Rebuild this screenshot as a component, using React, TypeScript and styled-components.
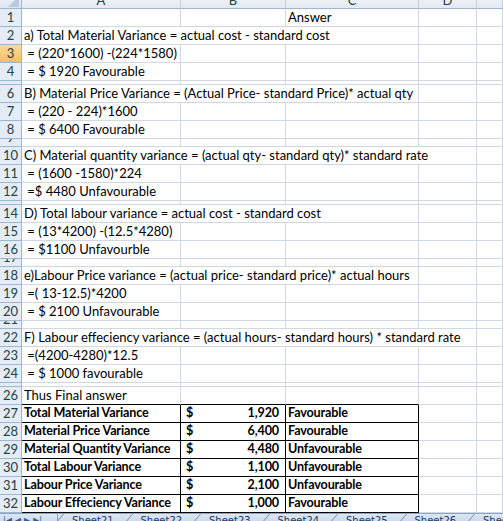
import React from "react";
import styled, { createGlobalStyle, css } from "styled-components";

const GlobalStyle = createGlobalStyle`
  html, body { margin: 0; padding: 0; background: #ffffff; overflow: hidden; }
  * { box-sizing: border-box; }
`;

const COLS = "22px 159px 105px 133px 58px 1fr";
const GRID = "#d0d7e5";
const HEAD_LINE = "#9eb6ce";
const FONT = `Lato, "Open Sans", "Liberation Sans", sans-serif`;

const Sheet = styled.div`
  width: 503px;
  height: 521px;
  overflow: hidden;
  display: flex;
  flex-direction: column;
  background: #fff;
  font-family: ${FONT};
  font-size: 13px;
  color: #000;
`;

const HeaderRow = styled.div`
  display: grid;
  grid-template-columns: ${COLS};
  height: 20px;
  margin-top: -11px;
  flex: none;
`;

const Corner = styled.div`
  background: linear-gradient(#f3f6fb, #dfe6f0);
  border-right: 1px solid ${HEAD_LINE};
  border-bottom: 1px solid ${HEAD_LINE};
  position: relative;
  svg { position: absolute; right: 2px; bottom: 1px; }
`;

const ColHead = styled.div`
  background: linear-gradient(#f7f9fc, #e4eaf3);
  border-right: 1px solid #c5d2e0;
  border-bottom: 1px solid ${HEAD_LINE};
  text-align: center;
  padding-top: 3px;
  line-height: 16px;
  color: #27413e;
  font-size: 13px;
`;

const Row = styled.div<{ $h: number }>`
  display: grid;
  grid-template-columns: ${COLS};
  height: ${(p) => p.$h}px;
  flex: none;
`;

const RowHead = styled.div<{ $selected?: boolean }>`
  display: flex;
  align-items: flex-end;
  justify-content: center;
  padding-bottom: 1px;
  overflow: hidden;
  border-right: 1px solid ${HEAD_LINE};
  border-bottom: 1px solid ${HEAD_LINE};
  background: ${(p) =>
    p.$selected ? "linear-gradient(#f9d99f, #f1c15f)" : "#e4ecf7"};
  color: #27413e;
  font-size: 13px;
  line-height: 16px;
`;

const Cell = styled.div<{
  $span?: number;
  $bold?: boolean;
  $boxed?: boolean;
  $edge?: boolean;
}>`
  grid-column: span ${(p) => p.$span ?? 1};
  display: flex;
  align-items: flex-end;
  padding: 0 2px 1px 2px;
  white-space: pre;
  overflow: hidden;
  line-height: 16px;
  border-right: 1px solid ${GRID};
  border-bottom: 1px solid ${GRID};
  ${(p) =>
    p.$bold &&
    css`
      font-weight: 700;
      font-size: 12.6px;
      letter-spacing: -0.15px;
    `}
  ${(p) =>
    p.$edge &&
    css`
      border-bottom-color: #000;
    `}
  ${(p) =>
    p.$boxed &&
    css`
      border-right-color: #000;
      border-bottom-color: #000;
    `}
`;

const MoneyCell = styled(Cell)`
  justify-content: space-between;
  padding: 0 6px 1px 5px;
`;

const TabBar = styled.div`
  flex: none;
  height: 8px;
  overflow: hidden;
  display: flex;
  background: linear-gradient(#dce6f4, #cfdbec);
  border-top: 1px solid #8ea6c2;
  font-family: Tahoma, "DejaVu Sans", sans-serif;
  font-size: 10px;
  color: #1e395b;
`;

const NavArea = styled.div`
  width: 58px;
  flex: none;
  display: flex;
  gap: 3px;
  padding: 1px 0 0 3px;
  border-right: 1px solid #8ea6c2;
  font-size: 8px;
  line-height: 12px;
  color: #3b5a82;
`;

const Tab = styled.div`
  width: 68.5px;
  flex: none;
  position: relative;
  padding: 1px 0 0 14px;
  line-height: 12px;
  &::before {
    content: "";
    position: absolute;
    left: 5px;
    top: 0;
    width: 1px;
    height: 20px;
    background: #7a8ea8;
    transform: skewX(-40deg);
    transform-origin: top left;
  }
`;

type CellSpec = { text?: string; span?: number; edge?: boolean };
type RowSpec = { n: number; h: number; cells?: CellSpec[]; selected?: boolean };

const rows: RowSpec[] = [
  { n: 1, h: 18, cells: [{}, {}, { text: "Answer" }] },
  { n: 2, h: 18, cells: [{ text: "a) Total Material Variance = actual cost - standard cost", span: 3 }] },
  { n: 3, h: 18, cells: [{ text: " = (220*1600) -(224*1580)" }], selected: true },
  { n: 4, h: 18, cells: [{ text: " = $ 1920 Favourable" }] },
  { n: 5, h: 4 },
  { n: 6, h: 18, cells: [{ text: "B) Material Price Variance = (Actual Price- standard Price)* actual qty", span: 3 }] },
  { n: 7, h: 18, cells: [{ text: " = (220 - 224)*1600" }] },
  { n: 8, h: 18, cells: [{ text: " = $ 6400 Favourable" }] },
  { n: 9, h: 8 },
  { n: 10, h: 18, cells: [{ text: "C) Material quantity variance = (actual qty- standard qty)* standard rate", span: 4 }] },
  { n: 11, h: 18, cells: [{ text: " = (1600 -1580)*224" }] },
  { n: 12, h: 18, cells: [{ text: " =$ 4480 Unfavourable" }] },
  { n: 13, h: 4 },
  { n: 14, h: 18, cells: [{ text: "D) Total labour variance = actual cost - standard cost", span: 3 }] },
  { n: 15, h: 18, cells: [{ text: " = (13*4200) -(12.5*4280)" }] },
  { n: 16, h: 18, cells: [{ text: " = $1100 Unfavourble" }] },
  { n: 17, h: 8 },
  { n: 18, h: 18, cells: [{ text: "e)Labour Price variance = (actual price- standard price)* actual hours", span: 3 }] },
  { n: 19, h: 18, cells: [{ text: " =( 13-12.5)*4200" }] },
  { n: 20, h: 18, cells: [{ text: " = $ 2100 Unfavourable" }] },
  { n: 21, h: 8 },
  { n: 22, h: 18, cells: [{ text: "F) Labour effeciency variance = (actual hours- standard hours) * standard rate", span: 4 }] },
  { n: 23, h: 18, cells: [{ text: " =(4200-4280)*12.5" }] },
  { n: 24, h: 18, cells: [{ text: " = $ 1000 favourable" }] },
  { n: 25, h: 4 },
  { n: 26, h: 18, cells: [{ text: "Thus Final answer", edge: true }, { edge: true }, { edge: true }] },
];

const summary = [
  { n: 27, label: "Total Material Variance", amount: "1,920", status: "Favourable" },
  { n: 28, label: "Material Price Variance", amount: "6,400", status: "Favourable" },
  { n: 29, label: "Material Quantity Variance", amount: "4,480", status: "Unfavourable" },
  { n: 30, label: "Total Labour Variance", amount: "1,100", status: "Unfavourable" },
  { n: 31, label: "Labour Price Variance", amount: "2,100", status: "Unfavourable" },
  { n: 32, label: "Labour Effeciency Variance", amount: "1,000", status: "Favourable" },
];

const padCells = (cells: CellSpec[] = []): CellSpec[] => {
  const used = cells.reduce((s, c) => s + (c.span ?? 1), 0);
  const out = [...cells];
  for (let i = used; i < 5; i++) out.push({});
  return out;
};

const tabs = ["Sheet21", "Sheet22", "Sheet23", "Sheet24", "Sheet25", "Sheet26", "Sheet27"];

export default function App() {
  return (
    <>
      <GlobalStyle />
      <Sheet>
        <HeaderRow>
          <Corner>
            <svg width="11" height="11" viewBox="0 0 11 11">
              <polygon points="11,0 11,11 0,11" fill="#b9c8da" />
            </svg>
          </Corner>
          {["A", "B", "C", "D", ""].map((l, i) => (
            <ColHead key={i}>{l}</ColHead>
          ))}
        </HeaderRow>

        {rows.map((r) => (
          <Row key={r.n} $h={r.h}>
            <RowHead $selected={r.selected}>{r.n}</RowHead>
            {padCells(r.cells).map((c, i) => (
              <Cell key={i} $span={c.span} $edge={c.edge}>
                {c.text ?? ""}
              </Cell>
            ))}
          </Row>
        ))}

        {summary.map((s) => (
          <Row key={s.n} $h={18}>
            <RowHead>{s.n}</RowHead>
            <Cell $bold $boxed>{s.label}</Cell>
            <MoneyCell $bold $boxed>
              <span>$</span>
              <span>{s.amount}</span>
            </MoneyCell>
            <Cell $bold $boxed>{s.status}</Cell>
            <Cell />
            <Cell />
          </Row>
        ))}

        <TabBar>
          <NavArea>
            <span>|◀</span>
            <span>◀</span>
            <span>▶</span>
            <span>▶|</span>
          </NavArea>
          {tabs.map((t) => (
            <Tab key={t}>{t}</Tab>
          ))}
        </TabBar>
      </Sheet>
    </>
  );
}
